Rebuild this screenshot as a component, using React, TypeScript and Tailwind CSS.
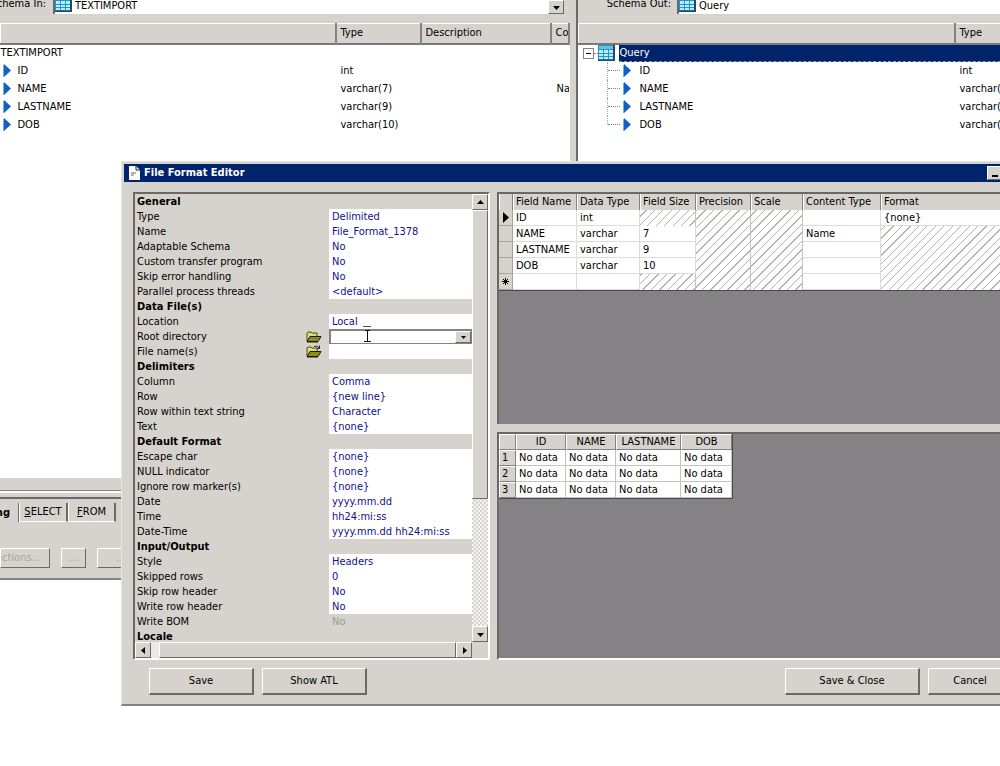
import React, { useState } from "react";

const raised = "border border-t-white border-l-white border-r-[#6b6967] border-b-[#6b6967] bg-[#d6d3ce]";

const sections = [
  {
    title: "General",
    rows: [
      { label: "Type", value: "Delimited" },
      { label: "Name", value: "File_Format_1378" },
      { label: "Adaptable Schema", value: "No" },
      { label: "Custom transfer program", value: "No" },
      { label: "Skip error handling", value: "No" },
      { label: "Parallel process threads", value: "<default>" },
    ],
  },
  {
    title: "Data File(s)",
    rows: [
      { label: "Location", value: "Local" },
      { label: "Root directory", value: "", folder: true, combo: true },
      { label: "File name(s)", value: "", folder: true },
    ],
  },
  {
    title: "Delimiters",
    rows: [
      { label: "Column", value: "Comma" },
      { label: "Row", value: "{new line}" },
      { label: "Row within text string", value: "Character" },
      { label: "Text", value: "{none}" },
    ],
  },
  {
    title: "Default Format",
    rows: [
      { label: "Escape char", value: "{none}" },
      { label: "NULL indicator", value: "{none}" },
      { label: "Ignore row marker(s)", value: "{none}" },
      { label: "Date", value: "yyyy.mm.dd" },
      { label: "Time", value: "hh24:mi:ss" },
      { label: "Date-Time", value: "yyyy.mm.dd hh24:mi:ss" },
    ],
  },
  {
    title: "Input/Output",
    rows: [
      { label: "Style", value: "Headers" },
      { label: "Skipped rows", value: "0" },
      { label: "Skip row header", value: "No" },
      { label: "Write row header", value: "No" },
      { label: "Write BOM", value: "No", disabled: true },
    ],
  },
  { title: "Locale", rows: [] },
] as {
  title: string;
  rows: { label: string; value: string; folder?: boolean; combo?: boolean; disabled?: boolean }[];
}[];

const columns = [
  { name: "ID", type: "int", content: "" },
  { name: "NAME", type: "varchar(7)", content: "Name" },
  { name: "LASTNAME", type: "varchar(9)", content: "" },
  { name: "DOB", type: "varchar(10)", content: "" },
];

// null cells are drawn hatched
const fields: (string | null)[][] = [
  ["ID", "int", null, null, null, "", "{none}"],
  ["NAME", "varchar", "7", null, null, "Name", null],
  ["LASTNAME", "varchar", "9", null, null, "", null],
  ["DOB", "varchar", "10", null, null, "", null],
  ["", "", null, null, null, "", null],
];

const TableIcon = () => (
  <svg width="17" height="16" viewBox="0 0 17 16" className="shrink-0">
    <rect x="0" y="0" width="17" height="16" fill="#2b8fc9" />
    <rect x="1" y="1" width="14" height="3" fill="#5fc3ea" />
    <path d="M1 5h4v3H1zM6 5h4v3H6zM11 5h4v3h-4zM1 9h4v2H1zM6 9h4v2H6zM11 9h4v2h-4zM1 12h4v2H1zM6 12h4v2H6zM11 12h4v2h-4z" fill="#b4f0fc" />
    <path d="M16 0v15.500H0" fill="none" stroke="#1d4a66" strokeWidth="2" />
  </svg>
);

const ColumnIcon = () => (
  <svg width="9" height="14" viewBox="0 0 9 14" className="shrink-0">
    <path d="M1 0l7 6.500L1 13z" fill="#1260c4" />
    <path d="M.5 1v12" stroke="#6fb0f0" />
  </svg>
);

const FolderIcon = ({ arrow }: { arrow?: boolean }) => (
  <svg width="16" height="13" viewBox="0 0 16 13">
    <path d="M1 11V3l1-1h3l1 1h5v3" fill="#dcdc78" stroke="#4a4a10" />
    <path d="M1 11.500l3-5h11l-3 5z" fill="#8c8c18" stroke="#1c1c06" />
    <path d="M1 12h11" stroke="#1c1c06" />
    {arrow && <path d="M8 2c2-1.500 4-1 5 1M13.500 .5v3H11" fill="none" stroke="#222" />}
  </svg>
);

const Arrow = ({ dir }: { dir: "up" | "down" | "left" | "right" }) => {
  const shapes = { up: "M1 6h7L4.500 2z", down: "M1 3h7L4.500 7z", left: "M6 1v7L2 4.500z", right: "M3 1v7l4-3.500z" };
  return (
    <svg width="9" height="9" viewBox="0 0 9 9">
      <path d={shapes[dir]} fill="#000" />
    </svg>
  );
};

const ScrollButton = ({ dir }: { dir: "up" | "down" | "left" | "right" }) => (
  <button type="button" aria-label={dir} className={`flex h-4 w-4 shrink-0 items-center justify-center ${raised}`}>
    <Arrow dir={dir} />
  </button>
);

const SchemaTable = ({ root, wide }: { root: string; wide?: boolean }) => {
  const th = "border-r-2 border-r-[#848284] border-l border-l-white px-1 text-left font-normal whitespace-nowrap";
  return (
    <table className="w-full table-fixed border-collapse">
      <colgroup>
        <col className={wide ? "w-[376px]" : "w-[335px]"} />
        <col className="w-[85px]" />
        <col className="w-[130px]" />
        <col />
      </colgroup>
      <thead>
        <tr className="h-5 border-t border-b-2 border-t-white border-b-[#7b7977] bg-[#d6d3ce]">
          <th className={th}></th>
          <th className={th}>Type</th>
          <th className={th}>Description</th>
          <th className={`${th} overflow-hidden`}>Content Type</th>
        </tr>
      </thead>
      <tbody>
        <tr className="h-[18px]">
          {wide ? (
            <td colSpan={4}>
              <div className="flex h-[17px] items-center">
                <span className="ml-1 flex h-[11px] w-[11px] items-center justify-center border border-[#848284]">
                  <span className="h-px w-[5px] bg-black" />
                </span>
                <span className="w-1 border-t border-dotted border-[#848284]" />
                <TableIcon />
                <span className="ml-1 h-full flex-1 border-b border-dashed border-[#8c9cc4] bg-[#00246b] pl-px leading-4 text-white">
                  {root}
                </span>
              </div>
            </td>
          ) : (
            <td colSpan={4}>{root}</td>
          )}
        </tr>
        {columns.map((c, i) => (
          <tr key={c.name} className="h-[18px]">
            <td>
              <div className={`flex h-[18px] items-center ${wide ? "pl-7" : "pl-0.5"}`}>
                {wide && (
                  <span className={`flex w-4 flex-col border-l border-dotted border-[#a5a3a1] ${i === 3 ? "h-[9px] self-start" : "h-[18px]"}`}>
                    <span className={`w-3 border-b border-dotted border-[#848284] ${i === 3 ? "h-full" : "h-[9px]"}`} />
                  </span>
                )}
                <ColumnIcon />
                <span className={wide ? "ml-2" : "ml-1.5"}>{c.name}</span>
              </div>
            </td>
            <td className="px-[5px]">{c.type}</td>
            <td></td>
            <td className="overflow-hidden px-1.5">{c.content}</td>
          </tr>
        ))}
      </tbody>
    </table>
  );
};

const SchemaPane = ({ label, value, wide }: { label: string; value: string; wide?: boolean }) => (
  <section className="flex min-w-0 flex-col overflow-hidden bg-white">
    <div className="flex h-[23px] items-start bg-[#d6d3ce]">
      <label htmlFor={value} className={`-mt-1 shrink-0 text-right leading-4 ${wide ? "w-[93px]" : "w-[46px]"}`}>
        <span className="float-right whitespace-nowrap">{label}</span>
      </label>
      <div className={`flex h-3.5 flex-1 items-end border-l-2 border-[#6b6967] bg-white ${wide ? "ml-1.5" : "mr-1.5 ml-[7px]"}`}>
        <span className="flex h-3.5 items-end pb-0.5">
          <TableIcon />
        </span>
        <select id={value} className="h-4 flex-1 appearance-none pl-[3px] leading-4 outline-none">
          <option>{value}</option>
        </select>
        {!wide && (
          <button type="button" aria-label="Open list" className={`flex h-3.5 w-4 items-center justify-center ${raised}`}>
            <Arrow dir="down" />
          </button>
        )}
      </div>
    </div>
    <SchemaTable root={value} wide={wide} />
  </section>
);

const PropertyGrid = () => {
  const [values, setValues] = useState<Record<string, string>>({});

  const handleChange = (event: React.ChangeEvent<HTMLInputElement>) => {
    setValues({ ...values, [event.target.name]: event.target.value });
  };

  return (
    <div className="flex w-[357px] shrink-0 flex-col border-2 border-t-[#6b6967] border-r-white border-b-white border-l-[#6b6967]">
      <div className="flex">
        <div className="h-[448px] flex-1 overflow-hidden">
          {sections.map((s) => (
            <div key={s.title}>
              <h3 className="h-[15px] pl-0.5 text-[11px] leading-[15px] font-bold">{s.title}</h3>
              {s.rows.map((r) => (
                <div key={r.label} className="flex h-[15px] items-center">
                  <label htmlFor={r.label} className="flex-1 pl-0.5 leading-[15px]">
                    {r.label}
                  </label>
                  {r.folder && (
                    <button type="button" aria-label={`Browse ${r.label}`} className="mr-[7px]">
                      <FolderIcon arrow={!r.combo} />
                    </button>
                  )}
                  <div
                    className={`relative flex h-[15px] w-[143px] items-center ${r.disabled ? "" : "bg-white"} ${r.combo ? "border border-t-2 border-l-2 border-[#848284]" : ""}`}
                  >
                    <input
                      id={r.label}
                      name={r.label}
                      disabled={r.disabled}
                      value={values[r.label] ?? r.value}
                      onChange={handleChange}
                      className={`h-full w-full min-w-0 bg-transparent pl-[3px] outline-none ${r.disabled ? "text-[#9c9a96]" : "text-[#10108c]"}`}
                    />
                    {r.combo && (
                      <>
                        <button type="button" aria-label="Open list" className={`flex h-3 w-4 shrink-0 items-center justify-center ${raised}`}>
                          <svg width="5" height="3" viewBox="0 0 5 3">
                            <path d="M0 0h5L2.500 3z" fill="#000" />
                          </svg>
                        </button>
                        <svg width="9" height="17" viewBox="0 0 9 17" className="absolute -top-[5px] left-8">
                          <path d="M0 .5h8" stroke="#555" />
                          <path d="M2 4.500h5M4.500 4v11M1 15.500h7" fill="none" stroke="#111" />
                        </svg>
                      </>
                    )}
                  </div>
                </div>
              ))}
            </div>
          ))}
        </div>
        <div className="flex w-4 flex-col bg-[repeating-conic-gradient(#f4f3f1_0_25%,#d6d3ce_0_50%)] bg-[length:4px_4px]">
          <ScrollButton dir="up" />
          <div className={`h-[289px] ${raised}`} />
          <div className="flex-1" />
          <ScrollButton dir="down" />
        </div>
      </div>
      <div className="flex pr-4">
        <ScrollButton dir="left" />
        <div className="w-2 bg-[#eceae7]" />
        <div className={`flex-1 ${raised}`} />
        <ScrollButton dir="right" />
      </div>
    </div>
  );
};

const FieldTable = () => {
  const th = "border-r border-r-[#848284] border-l border-l-white bg-[#d6d3ce] px-0.5 text-left font-normal whitespace-nowrap";
  return (
    <table className="w-full table-fixed border-separate border-spacing-0 border-b border-[#4a4a4a] bg-white">
      <colgroup>
        <col className="w-[14px]" />
        <col className="w-16" />
        <col className="w-[63px]" />
        <col className="w-14" />
        <col className="w-[55px]" />
        <col className="w-[52px]" />
        <col className="w-[78px]" />
        <col />
      </colgroup>
      <thead>
        <tr className="h-4">
          <th className={th}></th>
          <th className={th}>Field Name</th>
          <th className={th}>Data Type</th>
          <th className={th}>Field Size</th>
          <th className={th}>Precision</th>
          <th className={th}>Scale</th>
          <th className={th}>Content Type</th>
          <th className={th}>Format</th>
        </tr>
      </thead>
      <tbody>
        {fields.map((f, i) => (
          <tr key={i} className="h-4">
            <th className="border-r border-b border-[#a5a3a1] bg-[#d6d3ce] font-bold">
              <span className="flex h-[15px] items-center justify-center">
                {i === 0 && (
                  <svg width="7" height="11" viewBox="0 0 7 11">
                    <path d="M1 0v11l6-5.500z" fill="#000" />
                  </svg>
                )}
                {i === 4 && (
                  <svg width="9" height="9" viewBox="0 0 9 9">
                    <path d="M4.500 1v7M1 4.500h7M2 2l5 5M7 2L2 7" stroke="#000" />
                  </svg>
                )}
              </span>
            </th>
            {f.map((v, j) =>
              v === null ? (
                <td
                  key={j}
                  className="border-r border-r-[#c6c3bf] bg-[repeating-linear-gradient(135deg,#fff_0_5px,#b5b3b1_5px_6px)] bg-fixed"
                />
              ) : (
                <td key={j} className="border-r border-b border-[#dedbd6] pl-[3px] leading-[15px]">
                  {v}
                </td>
              )
            )}
          </tr>
        ))}
      </tbody>
    </table>
  );
};

const PreviewTable = () => {
  const th = "border-r border-b border-[#848284] border-t border-l border-t-white border-l-white bg-[#d6d3ce] font-normal leading-[14px]";
  return (
    <table className="w-[234px] table-fixed border-separate border-spacing-0 border-r border-b border-[#4a4a4a] bg-white">
      <colgroup>
        <col className="w-[17px]" />
        <col className="w-[50px]" />
        <col className="w-[50px]" />
        <col className="w-[65px]" />
        <col className="w-[51px]" />
      </colgroup>
      <thead>
        <tr className="h-4">
          <th className={th}></th>
          {columns.map((c) => (
            <th key={c.name} className={th}>
              {c.name}
            </th>
          ))}
        </tr>
      </thead>
      <tbody>
        {[1, 2, 3].map((n) => (
          <tr key={n} className="h-4">
            <th className={`${th} pl-0.5 text-left`}>{n}</th>
            {columns.map((c) => (
              <td key={c.name} className="border-r border-b border-[#c6c3bf] pl-[3px] leading-[15px] whitespace-nowrap">
                No data
              </td>
            ))}
          </tr>
        ))}
      </tbody>
    </table>
  );
};

const DialogButton = ({ children, className = "w-[105px]" }: { children: React.ReactNode; className?: string }) => (
  <button
    type="button"
    className={`h-[27px] border-t border-r-2 border-b-2 border-l border-t-white border-r-[#6b6967] border-b-[#6b6967] border-l-white bg-[#d6d3ce] ${className}`}
  >
    {children}
  </button>
);

const FormatEditor = () => (
  <div
    role="dialog"
    aria-labelledby="editor-title"
    className="absolute top-[161px] -right-[42px] left-[121px] flex flex-col border border-b-2 border-t-[#e7e5e2] border-r-[#6b6967] border-b-[#848284] border-l-[#e7e5e2] bg-[#d6d3ce] p-0.5"
  >
    <header className="flex h-[18px] items-center bg-[#00246b] pr-0.5 pl-1 text-white">
      <svg width="13" height="14" viewBox="0 0 13 14">
        <path d="M1 0h7l4 4v10H1z" fill="#fff" />
        <path d="M8 0v4h4" fill="none" stroke="#00246b" />
        <path d="M3 7h5M3 9h3" stroke="#6b6967" />
      </svg>
      <h2 id="editor-title" className="ml-[3px] flex-1 font-bold">
        File Format Editor
      </h2>
      <button type="button" aria-label="Minimize" className={`flex h-3.5 w-4 items-end justify-center pb-0.5 ${raised}`}>
        <span className="h-0.5 w-1.5 bg-black" />
      </button>
      <button type="button" aria-label="Maximize" className={`flex h-3.5 w-4 items-center justify-center ${raised}`}>
        <span className="h-2 w-2 border border-t-2 border-black" />
      </button>
      <button type="button" aria-label="Close" className={`ml-0.5 flex h-3.5 w-4 items-center justify-center ${raised}`}>
        <svg width="8" height="7" viewBox="0 0 8 7">
          <path d="M1 0l6 7M7 0L1 7" stroke="#000" />
        </svg>
      </button>
    </header>
    <div className="flex gap-[7px] pt-2.5 pl-[9px]">
      <PropertyGrid />
      <div className="flex min-w-0 flex-1 flex-col">
        <div className="h-[232px] border-t-2 border-l-2 border-[#6b6967] bg-[#848284]">
          <FieldTable />
        </div>
        <div className="mt-2 flex-1 border-t-2 border-b-2 border-l-2 border-[#6b6967] border-b-white bg-[#848284]">
          <PreviewTable />
        </div>
      </div>
    </div>
    <footer className="flex gap-2 pt-2 pr-[26px] pb-[7px] pl-[25px]">
      <DialogButton>Save</DialogButton>
      <DialogButton>Show ATL</DialogButton>
      <span className="flex-1" />
      <DialogButton className="w-[135px]">Save &amp; Close</DialogButton>
      <DialogButton className="w-[85px]">Cancel</DialogButton>
    </footer>
  </div>
);

const App = () => (
  <main className="relative min-h-screen overflow-hidden bg-white font-['DejaVu_Sans_Condensed','DejaVu_Sans',sans-serif] text-[11px] leading-4 text-black">
    <div className="grid h-[478px] grid-cols-[570px_1fr]">
      <SchemaPane label="Schema In:" value="TEXTIMPORT" />
      <div className="flex min-w-0">
        <div className="w-2 shrink-0 border-r-2 border-[#6b6967] bg-[#d6d3ce]" />
        <div className="grid flex-1">
          <SchemaPane label="Schema Out:" value="Query" wide />
        </div>
      </div>
    </div>
    <div className="border-b-2 border-[#848284] bg-[#d6d3ce]">
      <div className="h-[13px] border-b border-[#848284]" />
      <div className="h-2 border-t-2 border-b-2 border-t-white border-b-[#6b6967]" />
      <nav className="flex h-[23px] items-end">
        <button type="button" className="h-[19px] w-[19px] overflow-hidden border-r border-[#6b6967] font-bold">
          <span className="float-right mr-2">Mapping</span>
        </button>
        <button type="button" className="h-[19px] w-[49px] border-r-2 border-b border-l border-r-[#6b6967] border-b-white border-l-white">
          <u>S</u>ELECT
        </button>
        <button type="button" className="h-[19px] w-12 border-r-2 border-b border-l border-r-[#6b6967] border-b-white border-l-white">
          <u>F</u>ROM
        </button>
      </nav>
      <div className="flex gap-[11px] pt-[26px] pb-2.5 text-[#a5a3a1] [text-shadow:1px_1px_0_#fff]">
        <button type="button" className={`h-5 w-[50px] overflow-hidden ${raised}`}>
          <span className="float-right mr-2">Functions...</span>
        </button>
        <button type="button" className={`h-5 w-[25px] ${raised}`}>
          ...
        </button>
        <button type="button" className={`h-5 w-12 ${raised}`}>
          ...
        </button>
      </div>
    </div>
    <FormatEditor />
  </main>
);

export default App;
